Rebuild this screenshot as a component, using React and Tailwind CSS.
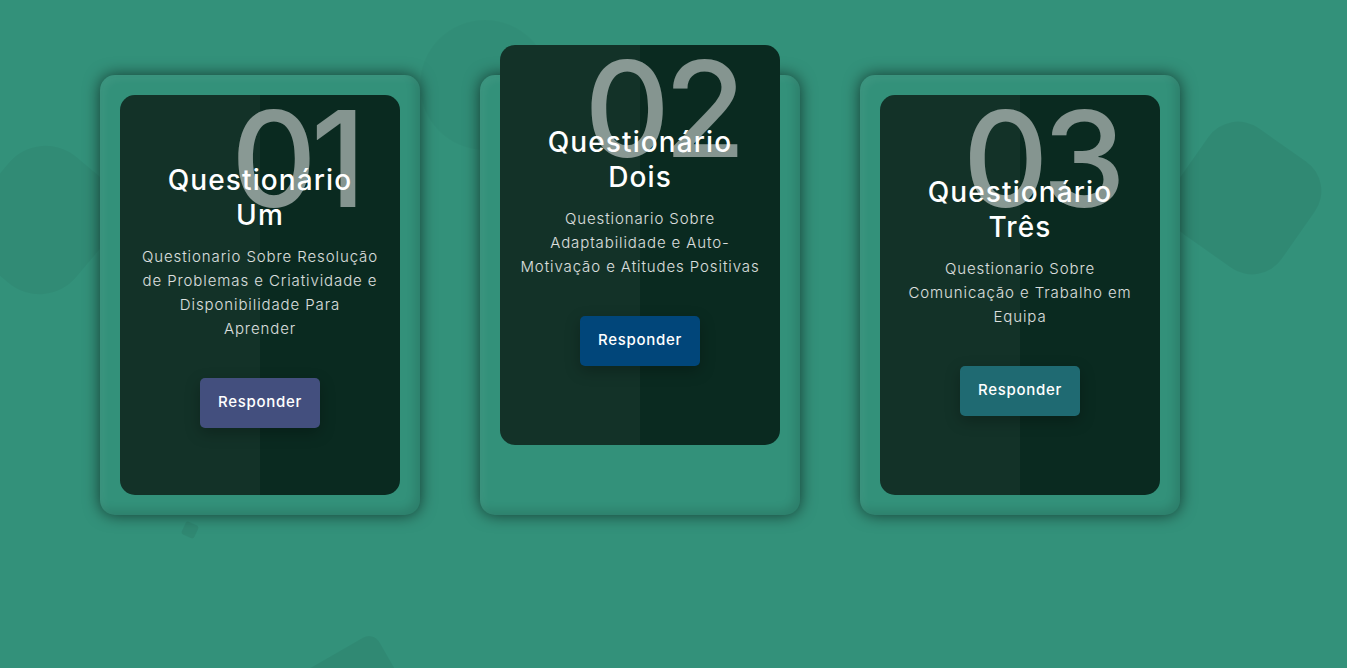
import React from 'react';

const cards = [
  {
    num: '01',
    title: ['Questionário', 'Um'],
    desc: ['Questionario Sobre Resolução', 'de Problemas e Criatividade e', 'Disponibilidade Para', 'Aprender'],
    btn: 'bg-[#434f7e]',
    lift: false,
  },
  {
    num: '02',
    title: ['Questionário', 'Dois'],
    desc: ['Questionario Sobre', 'Adaptabilidade e Auto-', 'Motivação e Atitudes Positivas'],
    btn: 'bg-[#01467a]',
    lift: true,
  },
  {
    num: '03',
    title: ['Questionário', 'Três'],
    desc: ['Questionario Sobre', 'Comunicação e Trabalho em', 'Equipa'],
    btn: 'bg-[#1f6a72]',
    lift: false,
  },
];

function Card({ card }) {
  return (
    <div className="w-[320px] h-[440px] p-5 rounded-[15px] bg-[#33917a] shadow-[inset_-5px_-5px_10px_rgba(0,0,0,0.12),inset_4px_4px_8px_rgba(255,255,255,0.05),0_0_16px_rgba(0,0,0,0.6)]">
      <div
        className={`relative h-full rounded-[15px] overflow-hidden bg-[#0a2a20] flex flex-col items-center justify-center px-5 text-center ${card.lift ? '-translate-y-[50px]' : ''}`}
      >
        {/* numero grande no fundo */}
        <span className="absolute right-[40px] top-[-3px] text-[133px] leading-none font-medium text-white/50 tracking-[-6px] select-none">
          {card.num}
        </span>
        <div className="absolute left-0 top-0 w-1/2 h-full bg-white/[0.04] pointer-events-none"></div>

        <h3 className="relative z-10 text-[28px] leading-[35px] font-medium text-white tracking-[1.1px]">
          {card.title[0]}
          <br />
          {card.title[1]}
        </h3>
        <p className="relative z-10 mt-3 text-[15px] leading-6 font-light text-white/85 tracking-[0.9px] whitespace-nowrap">
          {card.desc.map((l, i) => (
            <span key={i} className="block">{l}</span>
          ))}
        </p>
        <button className={`relative z-10 mt-[37px] w-[120px] h-[50px] rounded-[5px] ${card.btn} text-white text-[15px] font-medium tracking-[0.7px] shadow-[0_5px_15px_rgba(0,0,0,0.25)]`}>
          Responder
        </button>
      </div>
    </div>
  );
}

export default function App() {
  return (
    <div
      className="relative w-full h-[668px] overflow-hidden bg-[#33917a]"
      style={{ fontFamily: 'Inter, "Noto Sans", sans-serif' }}
    >
      {/* formas decorativas do fundo */}
      <div className="absolute left-[1180px] top-[133px] w-[130px] h-[130px] rounded-[36px] bg-black/[0.05] rotate-[35deg]"></div>
      <div className="absolute left-[-20px] top-[150px] w-[125px] h-[140px] rounded-[48px] bg-black/[0.04] rotate-[40deg]"></div>
      <div className="absolute left-[420px] top-[20px] w-[130px] h-[130px] rounded-full bg-black/[0.025]"></div>
      <div className="absolute left-[183px] top-[523px] w-[14px] h-[14px] rounded-[3px] bg-black/[0.06] rotate-[25deg]"></div>
      <div className="absolute left-[305px] top-[650px] w-[100px] h-[100px] rounded-[12px] bg-black/[0.05] rotate-[-30deg]"></div>

      <div className="relative flex gap-[60px] pl-[100px] pt-[75px]">
        {cards.map((c) => (
          <Card key={c.num} card={c} />
        ))}
      </div>
    </div>
  );
}
